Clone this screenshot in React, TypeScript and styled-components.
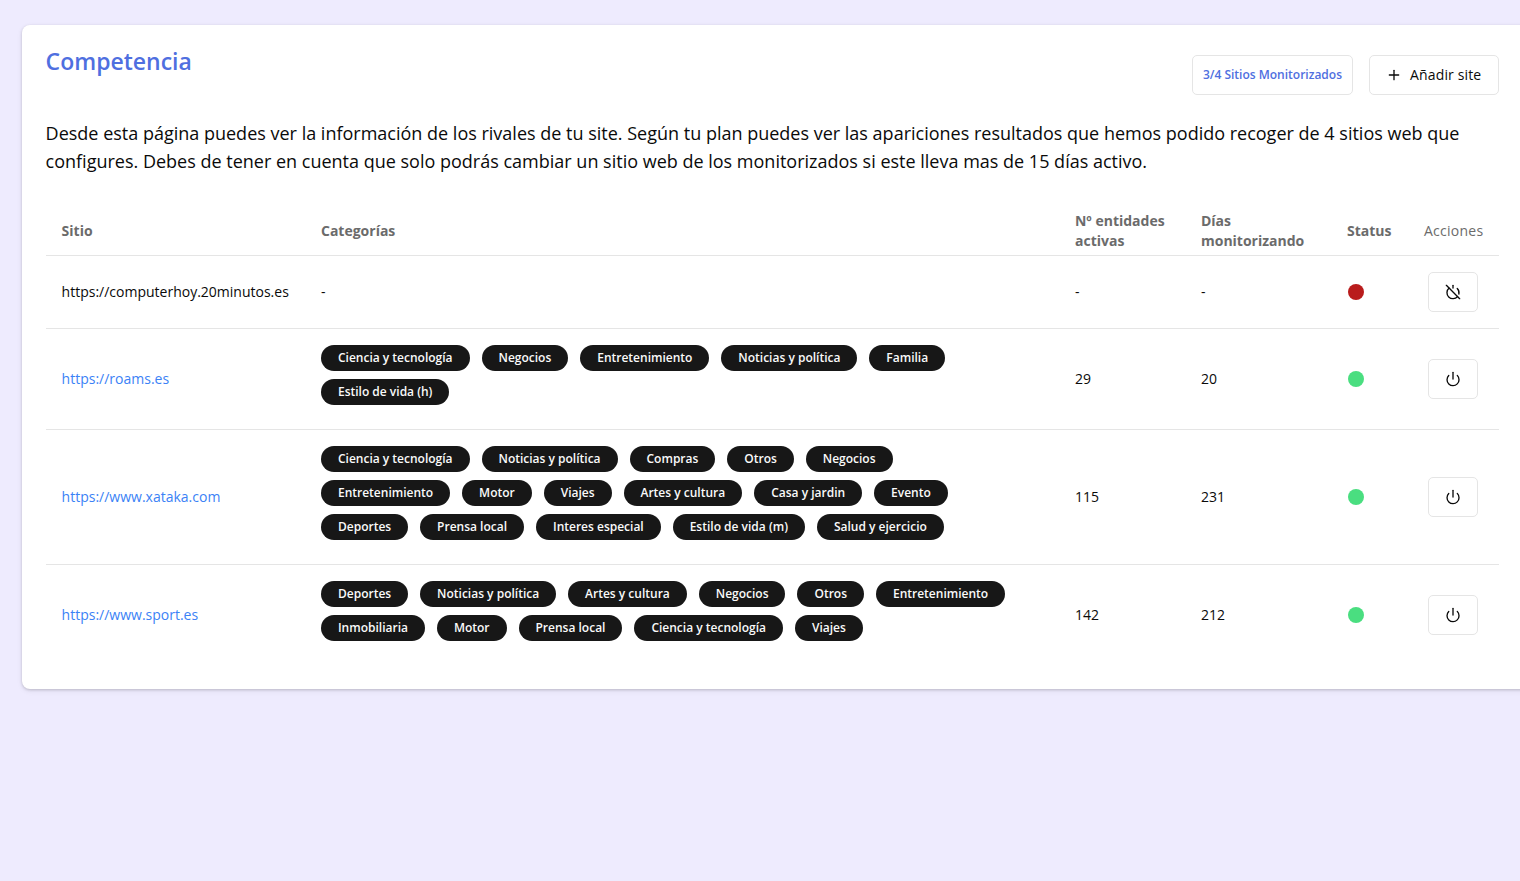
import { Plus, Power, PowerOff } from "lucide-react";
import styled, { createGlobalStyle } from "styled-components";

const GlobalStyle = createGlobalStyle`
  html, body {
    margin: 0;
    padding: 0;
    background: #eeebfe;
    font-family: "Open Sans", "Noto Sans", sans-serif;
    overflow: hidden;
  }
  * {
    box-sizing: border-box;
  }
`;

const Page = styled.main`
  width: 1520px;
  height: 881px;
  padding: 25px 0 0 22px;
  overflow: hidden;
`;

const Card = styled.section`
  width: 1525px;
  height: 664px;
  padding: 0 48px 0 23.6px;
  background: #fff;
  border-radius: 8px;
  box-shadow: 0 1px 3px rgba(0, 0, 0, 0.18), 0 2px 6px rgba(0, 0, 0, 0.06);
`;

const Header = styled.header`
  display: flex;
  align-items: flex-start;
  height: 94px;
  padding-top: 20px;
`;

const Title = styled.h1`
  flex: 1;
  margin: 0;
  font-size: 23px;
  line-height: 32px;
  font-weight: 600;
  color: #4f6fe0;
`;

const Actions = styled.div`
  display: flex;
  gap: 16px;
  margin-top: 10px;
`;

const Counter = styled.div`
  display: flex;
  align-items: center;
  height: 40px;
  padding: 0 10px 2px;
  border: 1px solid #e5e5e5;
  border-radius: 5px;
  font-size: 12px;
  font-weight: 600;
  color: #4f6fe0;
`;

const AddButton = styled.button`
  display: flex;
  align-items: center;
  gap: 8px;
  width: 130px;
  height: 40px;
  padding: 0 0 0 16px;
  background: #fff;
  border: 1px solid #e5e5e5;
  border-radius: 5px;
  font: 500 14px "Open Sans", sans-serif;
  letter-spacing: 0.15px;
  color: #0a0a0a;
`;

const ButtonLabel = styled.span`
  margin-top: -2px;
`;

const Intro = styled.p`
  margin: 0 0 26px;
  font-size: 18px;
  line-height: 28px;
  color: #0a0a0a;
`;

const Table = styled.table`
  width: 1453.4px;
  table-layout: fixed;
  border-collapse: collapse;
`;

const Th = styled.th<{ $width: number; $light?: boolean; $center?: boolean }>`
  width: ${(p) => p.$width}px;
  height: 54px;
  padding: 6px 16px 0;
  border-bottom: 1px solid #e5e5e5;
  text-align: ${(p) => (p.$center ? "center" : "left")};
  font-size: 14px;
  line-height: 20px;
  font-weight: ${(p) => (p.$light ? 500 : 700)};
  letter-spacing: ${(p) => (p.$light ? "0.25px" : "0")};
  color: #6b6b6b;
`;

const Row = styled.tr`
  border-bottom: 1px solid #e5e5e5;

  &:last-child {
    border-bottom: 0;
  }
`;

const Td = styled.td<{ $center?: boolean }>`
  padding: 16px;
  font-size: 14px;
  line-height: 20px;
  color: #0a0a0a;
  text-align: ${(p) => (p.$center ? "center" : "left")};
`;

const SiteLink = styled.a`
  color: #3b82f6;
  text-decoration: none;
`;

const Tags = styled.div`
  display: flex;
  flex-wrap: wrap;
  column-gap: 12px;
  row-gap: 8px;
  padding: 0 24px 8px 0;
`;

const Tag = styled.span`
  display: flex;
  align-items: center;
  height: 26px;
  padding: 0 16.97px;
  border-radius: 13px;
  background: #171717;
  font-size: 12px;
  font-weight: 600;
  color: #fafafa;
  white-space: nowrap;
`;

const StatusDot = styled.span<{ $active: boolean }>`
  display: block;
  width: 16px;
  height: 16px;
  margin-left: 1px;
  border-radius: 50%;
  background: ${(p) => (p.$active ? "#4ade80" : "#b91c1c")};
`;

const IconButton = styled.button`
  display: inline-flex;
  align-items: center;
  justify-content: center;
  vertical-align: middle;
  width: 50px;
  height: 40px;
  margin-left: -1px;
  padding: 0;
  background: #fff;
  border: 1px solid #e5e5e5;
  border-radius: 5px;
  color: #0a0a0a;
`;

type Site = {
  url: string;
  active: boolean;
  categories: string[];
  entities: string;
  days: string;
};

const sites: Site[] = [
  {
    url: "https://computerhoy.20minutos.es",
    active: false,
    categories: [],
    entities: "-",
    days: "-",
  },
  {
    url: "https://roams.es",
    active: true,
    categories: [
      "Ciencia y tecnología",
      "Negocios",
      "Entretenimiento",
      "Noticias y política",
      "Familia",
      "Estilo de vida (h)",
    ],
    entities: "29",
    days: "20",
  },
  {
    url: "https://www.xataka.com",
    active: true,
    categories: [
      "Ciencia y tecnología",
      "Noticias y política",
      "Compras",
      "Otros",
      "Negocios",
      "Entretenimiento",
      "Motor",
      "Viajes",
      "Artes y cultura",
      "Casa y jardin",
      "Evento",
      "Deportes",
      "Prensa local",
      "Interes especial",
      "Estilo de vida (m)",
      "Salud y ejercicio",
    ],
    entities: "115",
    days: "231",
  },
  {
    url: "https://www.sport.es",
    active: true,
    categories: [
      "Deportes",
      "Noticias y política",
      "Artes y cultura",
      "Negocios",
      "Otros",
      "Entretenimiento",
      "Inmobiliaria",
      "Motor",
      "Prensa local",
      "Ciencia y tecnología",
      "Viajes",
    ],
    entities: "142",
    days: "212",
  },
];

const App = () => {
  return (
    <Page>
      <GlobalStyle />
      <Card>
        <Header>
          <Title>Competencia</Title>
          <Actions>
            <Counter>3/4 Sitios Monitorizados</Counter>
            <AddButton>
              <Plus size={16} />
              <ButtonLabel>Añadir site</ButtonLabel>
            </AddButton>
          </Actions>
        </Header>
        <Intro>
          Desde esta página puedes ver la información de los rivales de tu site.
          Según tu plan puedes ver las apariciones resultados que hemos podido
          recoger de 4 sitios web que configures. Debes de tener en cuenta que
          solo podrás cambiar un sitio web de los monitorizados si este lleva
          mas de 15 días activo.
        </Intro>
        <Table>
          <thead>
            <tr>
              <Th $width={259.4}>Sitio</Th>
              <Th $width={754}>Categorías</Th>
              <Th $width={126}>Nº entidades activas</Th>
              <Th $width={146}>Días monitorizando</Th>
              <Th $width={77}>Status</Th>
              <Th $width={91} $light $center>
                Acciones
              </Th>
            </tr>
          </thead>
          <tbody>
            {sites.map((site) => (
              <Row key={site.url}>
                <Td>
                  {site.active ? (
                    <SiteLink href={site.url}>{site.url}</SiteLink>
                  ) : (
                    site.url
                  )}
                </Td>
                <Td>
                  {site.categories.length > 0 ? (
                    <Tags>
                      {site.categories.map((category) => (
                        <Tag key={category}>{category}</Tag>
                      ))}
                    </Tags>
                  ) : (
                    "-"
                  )}
                </Td>
                <Td>{site.entities}</Td>
                <Td>{site.days}</Td>
                <Td>
                  <StatusDot $active={site.active} />
                </Td>
                <Td $center>
                  <IconButton>
                    {site.active ? <Power size={16} /> : <PowerOff size={16} />}
                  </IconButton>
                </Td>
              </Row>
            ))}
          </tbody>
        </Table>
      </Card>
    </Page>
  );
};

export default App;
